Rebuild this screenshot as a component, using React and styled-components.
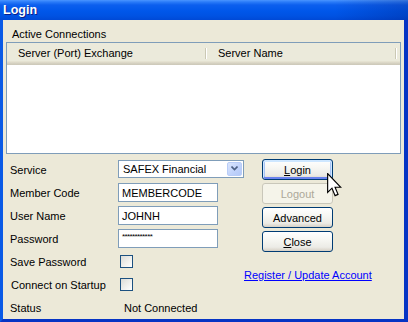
import React from 'react';
import styled, { createGlobalStyle } from 'styled-components';

const GlobalStyle = createGlobalStyle`
  html, body { margin: 0; padding: 0; background: #ffffff; }
  body { font-family: "Liberation Sans", Arial, sans-serif; font-size: 11px; color: #000; }
`;

const Window = styled.div`
  position: relative;
  width: 408px;
  height: 322px;
  display: flex;
  flex-direction: column;
  overflow: hidden;
`;

const TitleBar = styled.div`
  height: 20px;
  flex: none;
  display: flex;
  align-items: center;
  padding-left: 3px;
  background:
    linear-gradient(90deg, rgba(0, 0, 0, 0) 82%, rgba(0, 10, 90, 0.22) 100%),
    linear-gradient(180deg, #4a95ff 0px, #2a7bf8 2px, #0c5fee 5px, #0057ea 11px, #0052e2 16px, #0049d6 20px);
  color: #fff;
  font-weight: bold;
  font-size: 12.5px;
  text-shadow: 1px 1px 0 #0a1e8a;
`;

const Frame = styled.div`
  flex: 1;
  display: flex;
  border-left: 3px solid #0a5ae6;
  border-right: 4px solid #0634c4;
  border-bottom: 3px solid #0634c4;
`;

const Body = styled.div`
  flex: 1;
  background: #ece9d8;
  padding: 7px 3px 0 3px;
  display: flex;
  flex-direction: column;
`;

const SectionLabel = styled.div`
  height: 14px;
  line-height: 14px;
  padding-left: 6px;
  margin-bottom: 1px;
`;

const ListView = styled.div`
  height: 110px;
  border: 1px solid #7f9db9;
  background: #fff;
  display: flex;
  flex-direction: column;
`;

const HeaderRow = styled.div`
  height: 22px;
  display: flex;
  background: linear-gradient(180deg, #ebeadb 0%, #ebeadb 80%, #e2decd 86%, #d6d2c2 92%, #cbc7b8 100%);
`;

const HeaderCell = styled.div`
  width: ${p => p.w}px;
  flex: none;
  box-sizing: border-box;
  padding: 0 0 2px 11px;
  display: flex;
  align-items: center;
  position: relative;
  &::after {
    content: '';
    position: absolute;
    right: 0;
    top: 5px;
    bottom: 6px;
    width: 2px;
    background: linear-gradient(90deg, #cac8b4 50%, #ffffff 50%);
  }
`;

const Lower = styled.div`
  display: grid;
  grid-template-columns: 108px 126px 1fr;
  grid-auto-rows: 23px;
  padding: 4px 0 0 4px;
  align-items: center;
`;

const Label = styled.div`
  padding-left: ${p => p.shift || 0}px;
`;

const Control = styled.div`
  display: flex;
  align-items: center;
  padding-left: ${p => p.pad || 0}px;
`;

const TextBox = styled.div`
  width: 100px;
  height: 19px;
  box-sizing: border-box;
  border: 1px solid #7f9db9;
  background: #fff;
  padding-left: 3px;
  display: flex;
  font-size: ${p => (p.secret ? '8px' : '11px')};
  letter-spacing: ${p => (p.secret ? '-0.6px' : '0')};
  align-items: ${p => (p.secret ? 'flex-start' : 'center')};
  padding-top: ${p => (p.secret ? '2px' : '0')};
`;

const Combo = styled.div`
  width: 136px;
  height: 18px;
  box-sizing: border-box;
  border: 1px solid #7f9db9;
  background: #fff;
  display: flex;
  align-items: center;
  padding: 1px 1px 1px 4px;
  margin-top: -2px;
`;

const ComboText = styled.span`
  flex: 1;
`;

const ComboButton = styled.div`
  width: 15px;
  height: 14px;
  border-radius: 2px;
  background: linear-gradient(135deg, #dbe6fd 0%, #c1d3fb 55%, #b3c8f7 100%);
  border: 1px solid #b9cdf8;
  box-sizing: border-box;
  display: flex;
  align-items: center;
  justify-content: center;
`;

const CheckBox = styled.div`
  width: 13px;
  height: 13px;
  box-sizing: border-box;
  border: 1px solid #1c5180;
  background: linear-gradient(135deg, #dcdcd7 0%, #f2f2ef 60%, #ffffff 100%);
  margin-left: 2px;
`;

const RightColumn = styled.div`
  grid-column: 3;
  grid-row: 1 / span 7;
  align-self: start;
  display: flex;
  flex-direction: column;
`;

const ButtonStack = styled.div`
  display: flex;
  flex-direction: column;
  gap: 3px;
  padding: 1px 0 0 18px;
`;

const Button = styled.div`
  width: 71px;
  height: 21px;
  box-sizing: border-box;
  border: 1px solid ${p => (p.disabled ? '#c9c7ba' : '#003c74')};
  border-radius: 3px;
  display: flex;
  align-items: center;
  justify-content: center;
  color: ${p => (p.disabled ? '#aca899' : '#000')};
  background: ${p => (p.disabled
    ? '#f5f4ea'
    : 'linear-gradient(180deg, #ffffff 0%, #f7f7f3 40%, #ecebe6 80%, #d6d0c5 100%)')};
  box-shadow: ${p => (p.focused
    ? 'inset 0 1px 0 1px #cee7ff, inset 0 -1px 0 1px #6982ee, inset 1px 0 0 1px #a9c4f5, inset -1px 0 0 1px #a9c4f5'
    : 'none')};
  u { text-decoration: underline; }
`;

const Link = styled.a`
  margin-top: 16px;
  line-height: 14px;
  color: #0000ff;
  text-decoration: underline;
  white-space: nowrap;
`;

const Cursor = styled.svg`
  position: absolute;
  left: 327px;
  top: 173px;
`;

function App() {
  return (
    <>
      <GlobalStyle />
      <Window>
        <TitleBar>Login</TitleBar>
        <Frame>
          <Body>
            <SectionLabel>Active Connections</SectionLabel>
            <ListView>
              <HeaderRow>
                <HeaderCell w={200}>Server (Port) Exchange</HeaderCell>
                <HeaderCell w={190}>Server Name</HeaderCell>
              </HeaderRow>
            </ListView>
            <Lower>
              <Label>Service</Label>
              <Control>
                <Combo>
                  <ComboText>SAFEX Financial</ComboText>
                  <ComboButton>
                    <svg width="7" height="5" viewBox="0 0 7 5">
                      <path d="M0.5 0.5 L3.5 3.5 L6.5 0.5" fill="none" stroke="#4d6185" strokeWidth="1.6" />
                    </svg>
                  </ComboButton>
                </Combo>
              </Control>
              <RightColumn>
                <ButtonStack>
                  <Button focused><span><u>L</u>ogin</span></Button>
                  <Button disabled><span>Lo<u>g</u>out</span></Button>
                  <Button>Advanced</Button>
                  <Button><span><u>C</u>lose</span></Button>
                </ButtonStack>
                <Link>Register / Update Account</Link>
              </RightColumn>

              <Label>Member Code</Label>
              <Control><TextBox>MEMBERCODE</TextBox></Control>

              <Label>User Name</Label>
              <Control><TextBox>JOHNH</TextBox></Control>

              <Label>Password</Label>
              <Control><TextBox secret>************</TextBox></Control>

              <Label>Save Password</Label>
              <Control><CheckBox /></Control>

              <Label shift={1}>Connect on Startup</Label>
              <Control><CheckBox /></Control>

              <Label>Status</Label>
              <Control pad={6}>Not Connected</Control>
            </Lower>
          </Body>
        </Frame>
        <Cursor width="15" height="24" viewBox="0 0 13 21">
          <path d="M0.5 0.5 L0.5 17 L4.3 13.3 L7 19.8 L9.6 18.7 L7 12.5 L12 12.5 Z" fill="#fff" stroke="#000" strokeWidth="1" strokeLinejoin="miter" />
        </Cursor>
      </Window>
    </>
  );
}

export default App;
